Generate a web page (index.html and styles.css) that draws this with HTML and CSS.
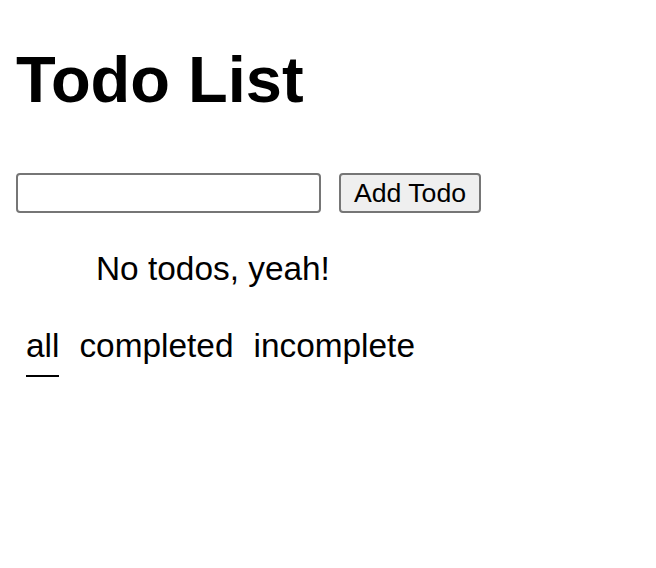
FILE: index.html
```html
<!DOCTYPE html>
<html>
<head>
<meta charset="utf-8">
<title>Todo List</title>
<link rel="stylesheet" href="styles.css">
</head>
<body>
<h1 class="title">Todo List</h1>
<form class="add-form">
  <input class="todo-input" type="text">
  <button class="add-btn" type="button">Add Todo</button>
</form>
<ul class="todo-list">
  <li class="empty">No todos, yeah!</li>
</ul>
<div class="filters">
  <button class="filter active" type="button"><span>all</span></button>
  <button class="filter" type="button"><span>completed</span></button>
  <button class="filter" type="button"><span>incomplete</span></button>
</div>
</body>
</html>
```
FILE: styles.css
```css
html, body {
  margin: 0;
  background: #fff;
}
body {
  padding: 0 16px;
  font-family: "Liberation Sans", Arial, Helvetica, sans-serif;
  color: #000;
}
.title {
  margin: 43px 0 56px;
  font-size: 65px;
  line-height: 74px;
  font-weight: bold;
}
.add-form {
  display: flex;
  gap: 18px;
  margin: 0;
}
.todo-input {
  box-sizing: border-box;
  width: 305px;
  height: 40px;
  margin: 0;
  border: 2px solid #767676;
  border-radius: 4px;
  background: #fff;
}
.add-btn {
  box-sizing: border-box;
  width: 142px;
  height: 40px;
  margin: 0;
  padding: 0;
  border: 2px solid #767676;
  border-radius: 4px;
  background: #efefef;
  font-family: "Liberation Sans", Arial, Helvetica, sans-serif;
  font-size: 26.67px;
  color: #000;
}
.todo-list {
  margin: 37px 0 0;
  padding-left: 80px;
  list-style: none;
}
.empty {
  font-size: 33.4px;
  line-height: 37px;
}
.filters {
  display: flex;
  margin-top: 40px;
}
.filter {
  margin: 0;
  padding: 0 10px;
  border: 0;
  background: none;
  font-family: "Liberation Sans", Arial, Helvetica, sans-serif;
  font-size: 33.4px;
  line-height: 37px;
  color: #000;
}
.filter span {
  display: inline-block;
  padding-bottom: 11px;
  border-bottom: 2px solid transparent;
}
.filter.active span {
  border-bottom-color: #000;
}
```
